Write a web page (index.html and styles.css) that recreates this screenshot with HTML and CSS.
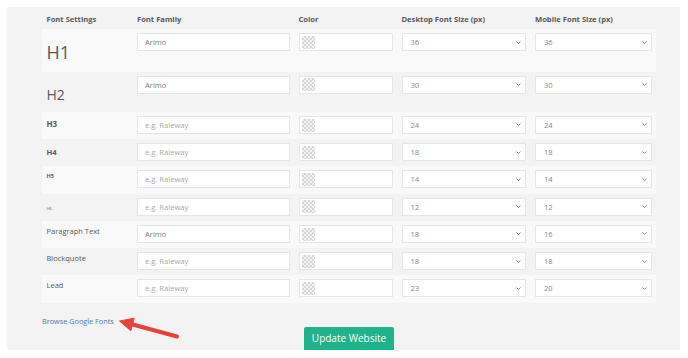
FILE: index.html
```html
<!DOCTYPE html>
<html lang="en">
<head>
  <meta charset="UTF-8" />
  <title>Font Settings</title>
  <link rel="stylesheet" href="styles.css">
</head>
<body>
  <div class="panel">
    <table class="font-table">
      <colgroup>
        <col class="c-label">
        <col class="c-family">
        <col class="c-color">
        <col class="c-desk">
        <col class="c-mob">
      </colgroup>
      <thead>
        <tr>
          <th>Font Settings</th>
          <th>Font Family</th>
          <th>Color</th>
          <th>Desktop Font Size (px)</th>
          <th>Mobile Font Size (px)</th>
        </tr>
      </thead>
      <tbody>
        <tr>
          <td><span class="lbl lbl-h1">H1</span></td>
          <td><input class="field" type="text" value="Arimo" placeholder="e.g. Raleway"></td>
          <td><div class="color-field"><span class="swatch"></span></div></td>
          <td><div class="select"><span>36</span><svg width="5" height="3" viewBox="0 0 5 3"><path d="M0.5 0.5 L2.5 2.5 L4.5 0.5" /></svg></div></td>
          <td><div class="select"><span>36</span><svg width="5" height="3" viewBox="0 0 5 3"><path d="M0.5 0.5 L2.5 2.5 L4.5 0.5" /></svg></div></td>
        </tr>
        <tr>
          <td><span class="lbl lbl-h2">H2</span></td>
          <td><input class="field" type="text" value="Arimo" placeholder="e.g. Raleway"></td>
          <td><div class="color-field"><span class="swatch"></span></div></td>
          <td><div class="select"><span>30</span><svg width="5" height="3" viewBox="0 0 5 3"><path d="M0.5 0.5 L2.5 2.5 L4.5 0.5" /></svg></div></td>
          <td><div class="select"><span>30</span><svg width="5" height="3" viewBox="0 0 5 3"><path d="M0.5 0.5 L2.5 2.5 L4.5 0.5" /></svg></div></td>
        </tr>
        <tr>
          <td><span class="lbl lbl-h3">H3</span></td>
          <td><input class="field" type="text" placeholder="e.g. Raleway"></td>
          <td><div class="color-field"><span class="swatch"></span></div></td>
          <td><div class="select"><span>24</span><svg width="5" height="3" viewBox="0 0 5 3"><path d="M0.5 0.5 L2.5 2.5 L4.5 0.5" /></svg></div></td>
          <td><div class="select"><span>24</span><svg width="5" height="3" viewBox="0 0 5 3"><path d="M0.5 0.5 L2.5 2.5 L4.5 0.5" /></svg></div></td>
        </tr>
        <tr>
          <td><span class="lbl lbl-h4">H4</span></td>
          <td><input class="field" type="text" placeholder="e.g. Raleway"></td>
          <td><div class="color-field"><span class="swatch"></span></div></td>
          <td><div class="select"><span>18</span><svg width="5" height="3" viewBox="0 0 5 3"><path d="M0.5 0.5 L2.5 2.5 L4.5 0.5" /></svg></div></td>
          <td><div class="select"><span>18</span><svg width="5" height="3" viewBox="0 0 5 3"><path d="M0.5 0.5 L2.5 2.5 L4.5 0.5" /></svg></div></td>
        </tr>
        <tr>
          <td><span class="lbl lbl-h5">H5</span></td>
          <td><input class="field" type="text" placeholder="e.g. Raleway"></td>
          <td><div class="color-field"><span class="swatch"></span></div></td>
          <td><div class="select"><span>14</span><svg width="5" height="3" viewBox="0 0 5 3"><path d="M0.5 0.5 L2.5 2.5 L4.5 0.5" /></svg></div></td>
          <td><div class="select"><span>14</span><svg width="5" height="3" viewBox="0 0 5 3"><path d="M0.5 0.5 L2.5 2.5 L4.5 0.5" /></svg></div></td>
        </tr>
        <tr>
          <td><span class="lbl lbl-h6">H6</span></td>
          <td><input class="field" type="text" placeholder="e.g. Raleway"></td>
          <td><div class="color-field"><span class="swatch"></span></div></td>
          <td><div class="select"><span>12</span><svg width="5" height="3" viewBox="0 0 5 3"><path d="M0.5 0.5 L2.5 2.5 L4.5 0.5" /></svg></div></td>
          <td><div class="select"><span>12</span><svg width="5" height="3" viewBox="0 0 5 3"><path d="M0.5 0.5 L2.5 2.5 L4.5 0.5" /></svg></div></td>
        </tr>
        <tr>
          <td><span class="lbl lbl-text">Paragraph Text</span></td>
          <td><input class="field" type="text" value="Arimo" placeholder="e.g. Raleway"></td>
          <td><div class="color-field"><span class="swatch"></span></div></td>
          <td><div class="select"><span>18</span><svg width="5" height="3" viewBox="0 0 5 3"><path d="M0.5 0.5 L2.5 2.5 L4.5 0.5" /></svg></div></td>
          <td><div class="select"><span>16</span><svg width="5" height="3" viewBox="0 0 5 3"><path d="M0.5 0.5 L2.5 2.5 L4.5 0.5" /></svg></div></td>
        </tr>
        <tr>
          <td><span class="lbl lbl-text">Blockquote</span></td>
          <td><input class="field" type="text" placeholder="e.g. Raleway"></td>
          <td><div class="color-field"><span class="swatch"></span></div></td>
          <td><div class="select"><span>18</span><svg width="5" height="3" viewBox="0 0 5 3"><path d="M0.5 0.5 L2.5 2.5 L4.5 0.5" /></svg></div></td>
          <td><div class="select"><span>18</span><svg width="5" height="3" viewBox="0 0 5 3"><path d="M0.5 0.5 L2.5 2.5 L4.5 0.5" /></svg></div></td>
        </tr>
        <tr>
          <td><span class="lbl lbl-text">Lead</span></td>
          <td><input class="field" type="text" placeholder="e.g. Raleway"></td>
          <td><div class="color-field"><span class="swatch"></span></div></td>
          <td><div class="select"><span>23</span><svg width="5" height="3" viewBox="0 0 5 3"><path d="M0.5 0.5 L2.5 2.5 L4.5 0.5" /></svg></div></td>
          <td><div class="select"><span>20</span><svg width="5" height="3" viewBox="0 0 5 3"><path d="M0.5 0.5 L2.5 2.5 L4.5 0.5" /></svg></div></td>
        </tr>
      </tbody>
    </table>

    <a class="browse" href="#">Browse Google Fonts</a>

    <div class="actions">
      <button class="btn-update">Update Website</button>
    </div>
  </div>

  <!-- annotation arrow pointing at the link -->
  <svg class="arrow" width="688" height="358" viewBox="0 0 688 358">
    <line x1="177" y1="336.5" x2="129" y2="323.5" />
    <polygon points="119.5,321 134.2,318.2 130.8,330.8" />
  </svg>
</body>
</html>
```

FILE: styles.css
```css
body {
  margin: 7px 8px 0 7px;
  background-color: #ffffff;
  font-family: 'Open Sans', 'Liberation Sans', sans-serif;
  color: #555;
}

.panel {
  background-color: #f3f3f3;
  box-shadow: 0 1px 6px rgba(0, 0, 0, 0.28);
  padding: 0 24px 0 35px;
  height: 343px;
  box-sizing: border-box;
  overflow: hidden;
}

.font-table {
  width: 614px;
  margin-top: 2px;
  table-layout: fixed;
  border-collapse: collapse;
}

.c-label { width: 90.5px; }
.c-family { width: 161.5px; }
.c-color { width: 103px; }
.c-desk { width: 133.5px; }
.c-mob { width: 125.5px; }

.font-table th {
  text-align: left;
  font-size: 7.6px;
  font-weight: 700;
  line-height: 10px;
  color: #5a5a5a;
  padding: 4.5px 4.5px 5.5px;
  white-space: nowrap;
}

.font-table td {
  padding: 4px 4.5px 5.25px;
  vertical-align: top;
}

.font-table tbody tr:nth-child(odd) {
  background-color: #f9f9f9;
}

.lbl {
  display: block;
  color: #5a5a5a;
  white-space: nowrap;
}

.lbl-h1 {
  font-size: 18px;
  line-height: 19.8px;
  margin: 9.6px 0 4px;
}

.lbl-h2 {
  font-size: 14px;
  line-height: 15.4px;
  margin: 11.2px 0 4.45px;
}

.lbl-h3 {
  font-size: 8px;
  font-weight: 700;
  line-height: 10px;
  margin-top: 2.7px;
}

.lbl-h4 {
  font-size: 7.6px;
  font-weight: 700;
  line-height: 10px;
  margin-top: 3.8px;
}

.lbl-h5 {
  font-size: 5.6px;
  font-weight: 700;
  line-height: 7px;
  margin-top: 3px;
}

.lbl-h6 {
  font-size: 4.2px;
  line-height: 6px;
  margin-top: 8px;
}

.lbl-text {
  font-size: 7.5px;
  line-height: 10px;
  margin-top: 0.8px;
}

.field {
  display: block;
  width: 100%;
  height: 18px;
  box-sizing: border-box;
  border: 1px solid #e6e6e6;
  background-color: #fff;
  padding: 0 7px;
  font-family: 'Open Sans', 'Liberation Sans', sans-serif;
  font-size: 7.6px;
  color: #7a7a7a;
  outline: none;
}

.field::placeholder {
  color: #aaa;
}

.color-field {
  height: 18px;
  box-sizing: border-box;
  border: 1px solid #e6e6e6;
  background-color: #fff;
  padding: 1.7px 2.5px;
}

.swatch {
  display: block;
  width: 13px;
  height: 13px;
  background-color: #f2f2f2;
  background-image: conic-gradient(#d6d6d6 25%, #f2f2f2 0 50%, #d6d6d6 0 75%, #f2f2f2 0);
  background-size: 4px 4px;
}

.select {
  display: flex;
  align-items: center;
  justify-content: space-between;
  height: 18px;
  box-sizing: border-box;
  border: 1px solid #e6e6e6;
  background-color: #fff;
  padding: 0 4px 0 8px;
  font-size: 7.6px;
  color: #888;
}

.select svg {
  fill: none;
  stroke: #888;
  stroke-width: 1;
}

.browse {
  display: block;
  width: max-content;
  margin-top: 12px;
  font-size: 7.3px;
  line-height: 12px;
  color: #4f79ad;
  text-decoration: none;
}

.actions {
  display: flex;
  justify-content: center;
}

.btn-update {
  width: 90px;
  height: 23px;
  border: none;
  border-radius: 2px 2px 0 0;
  background-color: #20b28a;
  color: #fff;
  font-family: 'Open Sans', 'Liberation Sans', sans-serif;
  font-size: 10px;
  font-weight: 500;
  padding: 0 0 1px;
  cursor: pointer;
}

.arrow {
  position: absolute;
  top: 0;
  left: 0;
  pointer-events: none;
}

.arrow line {
  stroke: #e8413a;
  stroke-width: 4;
  stroke-linecap: round;
}

.arrow polygon {
  fill: #e8413a;
  stroke: #e8413a;
  stroke-width: 1;
  stroke-linejoin: round;
}
```
